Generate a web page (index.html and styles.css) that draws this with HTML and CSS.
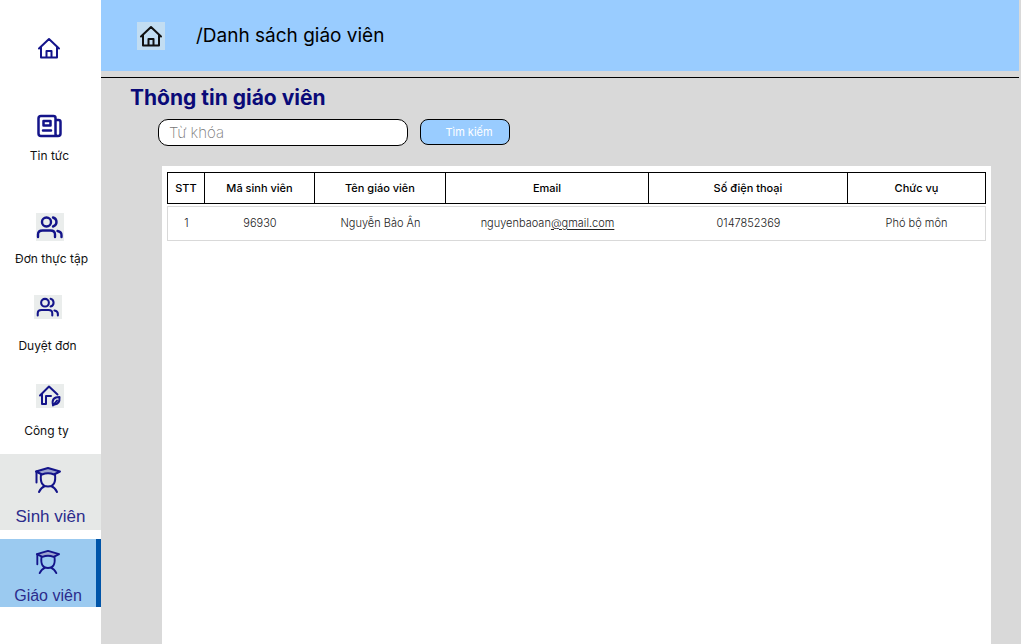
FILE: index.html
```html
<!DOCTYPE html>
<html lang="vi">
<head>
<meta charset="utf-8">
<meta name="viewport" content="width=device-width, initial-scale=1">
<title>Danh sách giáo viên</title>
<link rel="stylesheet" href="styles.css">
</head>
<body>
<svg class="sprite" aria-hidden="true">
  <symbol id="home" viewBox="0 0 24 24"><path d="M2 12.500 12 3l10 9.500M4 11V21.500H20V11M9.500 21.500V15H14.500V21.500"/></symbol>
  <symbol id="news" viewBox="0 0 28 28"><path stroke-width="2.500" d="M19.500 22V6a2 2 0 0 0-2-2H5a2.500 2.500 0 0 0-2.500 2.500v15A2.500 2.500 0 0 0 5 24h17a2.500 2.500 0 0 0 2.500-2.500V10A2 2 0 0 0 22.500 8h-3M19.500 22a2 2 0 0 0 2 2M7.500 9h7v4.500h-7zM7 18.500h8"/></symbol>
  <symbol id="users" viewBox="0 0 28 28"><g stroke-width="2.400"><circle cx="10.500" cy="9" r="4.500"/><path d="M2 24v-2.500q0-4 4.500-4h8q4.500 0 4.500 4V24M17 4.500q3.500 1 3.500 4.500T17 13.500M21.500 18q4 .8 4 4v2"/></g></symbol>
  <symbol id="company" viewBox="0 0 28 24"><path d="M4 11.500 13 2.500l8.500 8M6 10v10h4v-8h5M17 21q-2-8 6.500-8 .5 7-5 7.500zM17 21.500l4-5"/></symbol>
  <symbol id="graduate" viewBox="0 0 28 28"><path class="cap" d="M2 5.500 14 2l12 3.500L20 8.500q-6-2.500-12 0z"/><path d="M2.500 5.500v11M7 8.500q-1.500 12 7 12t7-12M5 26q2-4.500 6-6M23 26q-2-4.500-6-6"/></symbol>
</svg>
<div class="app">
  <nav class="sidebar">
    <a class="item home" href="#" aria-label="Trang chủ"><svg class="icon"><use href="#home"/></svg></a>
    <a class="item news" href="#"><svg class="icon"><use href="#news"/></svg><span>Tin tức</span></a>
    <a class="item intern" href="#"><svg class="icon tinted"><use href="#users"/></svg><span>Đơn thực tập</span></a>
    <a class="item review" href="#"><svg class="icon tinted"><use href="#users"/></svg><span>Duyệt đơn</span></a>
    <a class="item company" href="#"><svg class="icon tinted"><use href="#company"/></svg><span>Công ty</span></a>
    <a class="item tile student" href="#"><svg class="icon"><use href="#graduate"/></svg><span>Sinh viên</span></a>
    <a class="item tile teacher" href="#" aria-current="page"><svg class="icon"><use href="#graduate"/></svg><span>Giáo viên</span></a>
  </nav>
  <main class="main">
    <header class="topbar">
      <a class="crumb-home" href="#" aria-label="Trang chủ"><svg><use href="#home"/></svg></a>
      <span class="crumb">/Danh sách giáo viên</span>
    </header>
    <hr class="rule">
    <h1 class="title">Thông tin giáo viên</h1>
    <form class="search">
      <input class="keyword" type="text" placeholder="Từ khóa" aria-label="Từ khóa">
      <button class="submit" type="button">Tìm kiếm</button>
    </form>
    <section class="panel">
      <table class="table">
        <colgroup><col class="c-no"><col class="c-code"><col class="c-name"><col class="c-email"><col class="c-phone"><col class="c-role"></colgroup>
        <thead><tr><th>STT</th><th>Mã sinh viên</th><th>Tên giáo viên</th><th>Email</th><th>Số điện thoại</th><th>Chức vụ</th></tr></thead>
        <tbody><tr><td>1</td><td>96930</td><td>Nguyễn Bảo Ân</td><td>nguyenbaoan<a href="#">@gmail.com</a></td><td>0147852369</td><td>Phó bộ môn</td></tr></tbody>
      </table>
    </section>
  </main>
</div>
</body>
</html>
```
FILE: styles.css
```css
* { box-sizing: border-box; }
body { margin: 0; font-family: Inter, "Liberation Sans", sans-serif; color: #000; }
.sprite { position: absolute; width: 0; height: 0; }
svg { fill: none; stroke: #14148a; stroke-width: 2; stroke-linejoin: round; stroke-linecap: round; }
.app { display: flex; min-height: 100vh; background: #d9d9d9; }

.sidebar { flex: 0 0 101px; background: #fff; padding-top: 36px; }
.item { display: flex; flex-direction: column; align-items: center; color: #111; text-decoration: none; font-size: 12px; line-height: 16px; padding-right: 4px; white-space: nowrap; }
.icon { width: 28px; height: 28px; }
.tinted { background: #eaedec; }
.home .icon { width: 24px; height: 24px; }
.news { margin-top: 52px; gap: 8px; padding-right: 2px; }
.intern { margin-top: 49px; gap: 10px; padding: 0 0 0 2px; }
.intern .icon { margin-right: 4px; }
.review { margin-top: 28px; gap: 19px; padding-right: 6px; }
.review .icon, .company .icon { height: 24px; }
.company { margin-top: 30px; gap: 15px; padding-right: 8px; }
.company .icon { margin-left: 6px; }
.tile { font-family: "Liberation Sans", Arial, sans-serif; font-size: 17px; line-height: 20px; color: #2c2c8c; }
.student { margin-top: 15px; padding: 12px 0 3px; gap: 13px; background: #e6e8e7; }
.student .icon { margin-right: 5px; }
.teacher { margin-top: 9px; padding: 10px 0 1px; gap: 11px; font-size: 16px; background: #9bcaf0; border-right: 5px solid #0054a8; }
.teacher .icon { width: 26px; height: 26px; }
.cap { fill: #9da5cf; }

.main { flex: 1; min-width: 0; display: flex; flex-direction: column; }
.topbar { display: flex; align-items: center; gap: 31px; height: 71px; margin-right: 2px; padding-left: 36px; background: #99ccff; }
.crumb-home { display: flex; align-items: center; justify-content: center; width: 28px; height: 28px; background: #c2ddf2; }
.crumb-home svg { width: 24px; height: 24px; stroke: #111; }
.crumb { font-size: 19px; line-height: 24px; }
.rule { width: auto; height: 1px; margin: 6px 2px 0 0; border: 0; background: #000; }
.title { margin: 6px 0 0 29px; font-size: 21px; line-height: 28px; font-weight: 700; color: #0a0a78; }
.search { display: flex; align-items: flex-start; gap: 12px; margin: 7px 0 0 57px; }
.keyword { width: 250px; height: 27px; padding: 0 10px; border: 1px solid #000; border-radius: 10px; background: #fff; font: 300 15px Inter, sans-serif; }
.keyword::placeholder { color: #777; font-weight: 200; opacity: 1; }
.submit { width: 90px; height: 26px; padding: 0 0 0 8px; border: 1px solid #000; border-radius: 8px; background: #99ccff; color: #fff; font: 400 11px Inter, sans-serif; }

.panel { flex: 1; margin: 20px 30px 0 61px; padding: 4px 5px; background: #fff; }
.table { width: 100%; table-layout: fixed; border-collapse: separate; border-spacing: 0 2px; font-size: 11px; line-height: 14px; text-align: center; }
.c-no { width: 38px; }
.c-code { width: 110px; }
.c-name { width: 131px; }
.c-email { width: 203px; }
.c-phone { width: 199px; }
.c-role { width: 138px; }
th, td { padding: 0; }
th { height: 32px; font-weight: 500; border: 1px solid #000; border-left: 0; }
th:first-child { border-left: 1px solid #000; }
td { height: 35px; padding-bottom: 2px; color: #222; font-weight: 300; border: solid #d9d9d9; border-width: 1px 0; }
td:first-child { border-left-width: 1px; }
td:last-child { border-right-width: 1px; }
td a { color: inherit; text-underline-offset: 2px; }
```
